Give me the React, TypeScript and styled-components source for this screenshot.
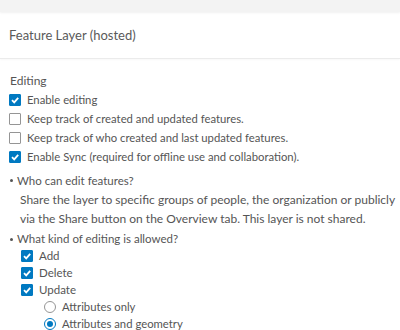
import React from "react";
import styled, { createGlobalStyle } from "styled-components";

const GlobalStyle = createGlobalStyle`
    body {
        margin: 0;
        background: #ffffff;
        font-family: Lato, "Noto Sans", sans-serif;
        color: #555555;
    }
`;

export default function App() {
    return (
        <Page>
            <GlobalStyle />
            <TopBar />
            <Header>Feature Layer (hosted)</Header>
            <Content>
                <SectionTitle>Editing</SectionTitle>
                <CheckRow label="Enable editing" checked />
                <CheckRow label="Keep track of created and updated features." />
                <CheckRow label="Keep track of who created and last updated features." />
                <CheckRow label="Enable Sync (required for offline use and collaboration)." checked />

                <Bullet $top={5}>Who can edit features?</Bullet>
                <Paragraph>
                    Share the layer to specific groups of people, the organization or publicly
                    <br />
                    via the Share button on the Overview tab. This layer is not shared.
                </Paragraph>

                <Bullet $top={3} $height={16}>What kind of editing is allowed?</Bullet>
                <SubList>
                    <CheckRow label="Add" checked small />
                    <CheckRow label="Delete" checked small />
                    <CheckRow label="Update" checked small />
                    <RadioList>
                        <RadioRow label="Attributes only" />
                        <RadioRow label="Attributes and geometry" selected />
                    </RadioList>
                </SubList>
            </Content>
        </Page>
    );
}

function CheckRow(props: { label: string; checked?: boolean; small?: boolean }) {
    return (
        <Row $height={props.small ? 17 : 19} $size={props.small ? 11.5 : 11.3}>
            <Box $checked={!!props.checked}>
                {props.checked && (
                    <svg width="10" height="10" viewBox="0 0 10 10">
                        <path d="M2 5.2 L4.2 7.4 L8.2 2.8" fill="none" stroke="#fff" strokeWidth="1.8" />
                    </svg>
                )}
            </Box>
            <Label>{props.label}</Label>
        </Row>
    );
}

function RadioRow(props: { label: string; selected?: boolean }) {
    return (
        <Row $height={17} $size={11.3}>
            <Radio $selected={!!props.selected}>{props.selected && <Dot />}</Radio>
            <Label>{props.label}</Label>
        </Row>
    );
}

const Page = styled.div`
    width: 400px;
    height: 330px;
    overflow: hidden;
    display: flex;
    flex-direction: column;
`;

const TopBar = styled.div`
    height: 12px;
    flex: none;
    background: #f3f3f3;
    box-shadow: 0 1px 2px rgba(0, 0, 0, 0.06);
`;

const Header = styled.div`
    height: 46px;
    flex: none;
    display: flex;
    align-items: center;
    padding-left: 9px;
    font-size: 13px;
    color: #5a5a5a;
    border-bottom: 1px solid #ebebeb;
    box-shadow: 0 1px 2px rgba(0, 0, 0, 0.03);
`;

const Content = styled.div`
    padding: 12px 0 0 9px;
    font-size: 12px;
`;

const SectionTitle = styled.div`
    height: 19px;
    line-height: 19px;
    font-size: 12px;
    padding-left: 1px;
`;

const Row = styled.div<{ $height: number; $size: number }>`
    height: ${p => p.$height}px;
    display: flex;
    align-items: center;
    gap: 6px;
    font-size: ${p => p.$size}px;
`;

const Box = styled.div<{ $checked: boolean }>`
    width: 12px;
    height: 12px;
    box-sizing: border-box;
    border-radius: 1px;
    border: 1px solid ${p => (p.$checked ? "#0079c1" : "#959595")};
    background: ${p => (p.$checked ? "#0079c1" : "#fff")};
    display: flex;
    align-items: center;
    justify-content: center;
    flex: none;
`;

const Radio = styled.div<{ $selected: boolean }>`
    width: 12px;
    height: 12px;
    box-sizing: border-box;
    border-radius: 50%;
    border: 1px solid ${p => (p.$selected ? "#0079c1" : "#959595")};
    background: #fff;
    display: flex;
    align-items: center;
    justify-content: center;
    flex: none;
`;

const Dot = styled.div`
    width: 6px;
    height: 6px;
    border-radius: 50%;
    background: #0079c1;
`;

const Label = styled.span`
    white-space: nowrap;
`;

const Bullet = styled.div<{ $top: number; $height?: number }>`
    margin-top: ${p => p.$top}px;
    height: ${p => p.$height ?? 19}px;
    line-height: ${p => p.$height ?? 19}px;
    display: flex;
    align-items: center;
    gap: 4px;
    font-size: 11.5px;
    &::before {
        content: "";
        width: 3px;
        height: 3px;
        border-radius: 50%;
        background: #555555;
        margin-left: 1px;
    }
`;

const Paragraph = styled.div`
    padding-left: 11px;
    line-height: 19px;
    white-space: nowrap;
`;

const SubList = styled.div`
    padding-left: 12px;
`;

const RadioList = styled.div`
    padding-left: 23px;
`;
